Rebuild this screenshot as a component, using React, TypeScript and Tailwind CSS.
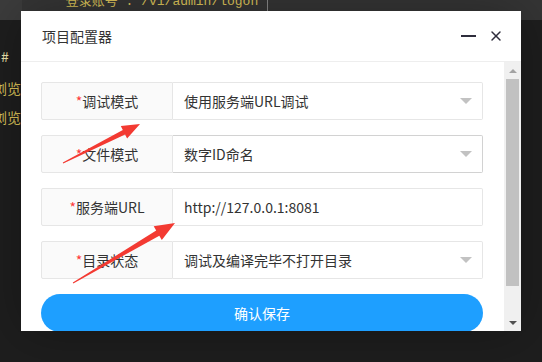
import { X } from 'lucide-react';

const cjk = { fontFamily: '"Noto Sans CJK SC", "Noto Sans", sans-serif' };

const rows = [
  { label: '调试模式', value: '使用服务端URL调试', select: true },
  { label: '文件模式', value: '数字ID命名', select: true, hover: true },
  { label: '服务端URL', value: 'http://127.0.0.1:8081', select: false },
  { label: '目录状态', value: '调试及编译完毕不打开目录', select: true },
];

function FormRow({ label, value, select, hover }: { label: string; value: string; select: boolean; hover?: boolean }) {
  return (
    <div className="flex h-[38px] mb-[15px] text-[14px] text-[#333]">
      <div className="w-[132px] shrink-0 flex items-center justify-center bg-[#fafafa] border border-[#e6e6e6] rounded-l-[2px]">
        <span className="text-[#ff3b3b]">*</span>
        {label}
      </div>
      <div
        className={`flex-1 flex items-center justify-between pl-[11px] pr-[10px] border border-l-0 rounded-r-[2px] ${
          hover ? 'border-[#d2d2d2]' : 'border-[#e6e6e6]'
        }`}
      >
        <span>{value}</span>
        {select && (
          <span className="w-0 h-0 border-l-[6px] border-r-[6px] border-t-[6px] border-l-transparent border-r-transparent border-t-[#c2c2c2]" />
        )}
      </div>
    </div>
  );
}

export default function App() {
  return (
    <div className="relative w-[542px] h-[362px] overflow-hidden bg-[#1e1e1e]" style={cjk}>
      {/* editor behind the dialog */}
      <div className="h-[20px] bg-[#353535] overflow-hidden flex">
        <div className="w-[22px] bg-[#3c3c3c]" />
        <div
          className="ml-[36px] -mt-[8px] h-[20px] text-[13px] leading-[20px] text-[#dcc35a] border-r border-[#888] pr-[1px]"
          style={{ fontFamily: '"Liberation Mono", "Noto Sans CJK SC", monospace' }}
        >
          "登录账号":"/v1/admin/logon"
        </div>
      </div>
      <div className="flex flex-col text-[14px] text-[#dcc35a] pt-[22px] leading-[29px]">
        <span className="ml-[1px] text-[#f0e6b0]">#</span>
        <span className="-ml-[7px] mt-[3px]">浏览</span>
        <span className="-ml-[7px]">浏览</span>
      </div>

      {/* dialog */}
      <div className="absolute left-[21px] top-[11px] w-[500px] h-[320px] bg-white flex flex-col shadow-[1px_1px_50px_rgba(0,0,0,0.3)]">
        <div className="h-[51px] shrink-0 flex items-center justify-between pl-[21px] pr-[17px] border-b border-[#eeeeee]">
          <span className="text-[14px] text-[#333]">项目配置器</span>
          <div className="flex items-center gap-[12px]">
            <span className="w-[15px] h-[2px] bg-[#2e2d3c]" />
            <X className="w-[16px] h-[16px] text-[#2e2d3c]" strokeWidth={2.2} />
          </div>
        </div>
        <div className="flex flex-1 min-h-0">
          <div className="flex-1 pl-[20px] pr-[21px] pt-[20px] overflow-hidden">
            {rows.map((r) => (
              <FormRow key={r.label} {...r} />
            ))}
            <div className="h-[38px] rounded-full bg-[#1e9fff] text-white text-[14px] flex items-center justify-center">
              确认保存
            </div>
          </div>
          <div className="w-[17px] shrink-0 bg-[#f0f0f0] flex flex-col items-center">
            <div className="h-[17px] flex items-center justify-center">
              <span className="w-0 h-0 border-l-[4px] border-r-[4px] border-b-[4px] border-l-transparent border-r-transparent border-b-[#a3a3a3]" />
            </div>
            <div className="w-[13px] h-[207px] bg-[#c1c1c1]" />
            <div className="flex-1" />
            <div className="h-[17px] flex items-center justify-center">
              <span className="w-0 h-0 border-l-[4px] border-r-[4px] border-t-[4px] border-l-transparent border-r-transparent border-t-[#505050]" />
            </div>
          </div>
        </div>
      </div>

      {/* red annotation arrows */}
      <svg className="absolute inset-0 pointer-events-none" width="542" height="362" viewBox="0 0 542 362">
        <polygon
          fill="#f33a32"
          points="63.2,163.5 125.1,134.4 127.1,138.4 140,124 120.8,125.9 122.8,129.9 62.8,162.6"
        />
        <polygon
          fill="#f33a32"
          points="73.3,283.4 159.3,235.7 161.8,240 175,223 153.7,226.2 156.2,230.6 72.8,282.6"
        />
      </svg>
    </div>
  );
}
